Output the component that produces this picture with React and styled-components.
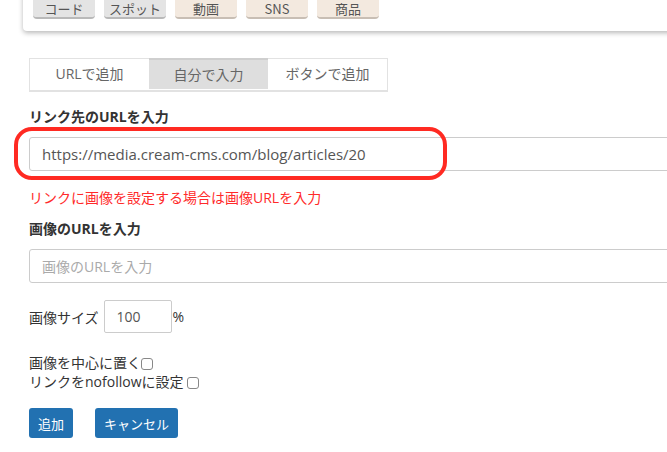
import styled, { createGlobalStyle } from "styled-components";

const GlobalStyle = createGlobalStyle`
  html, body {
    margin: 0;
    padding: 0;
    background: #fff;
    overflow: hidden;
  }
  body {
    font-family: "Open Sans", "Noto Sans CJK JP", sans-serif;
    color: #333;
  }
`;

const palette = ["コード", "スポット", "動画", "SNS", "商品"];

const App = () => {
  return (
    <Page>
      <GlobalStyle />
      <Palette>
        {palette.map((p, i) => (
          <PaletteButton key={p} beige={i > 1}>
            {p}
          </PaletteButton>
        ))}
      </Palette>
      <Form>
        <Tabs>
          <Tab>URLで追加</Tab>
          <Tab active>自分で入力</Tab>
          <Tab>ボタンで追加</Tab>
        </Tabs>
        <Label>リンク先のURLを入力</Label>
        <Highlight>
          <TextInput defaultValue="https://media.cream-cms.com/blog/articles/20" />
          <RedRing />
        </Highlight>
        <Note>リンクに画像を設定する場合は画像URLを入力</Note>
        <Label tight>画像のURLを入力</Label>
        <Field>
          <TextInput placeholder="画像のURLを入力" />
        </Field>
        <SizeRow>
          画像サイズ
          <SizeInput defaultValue="100" />%
        </SizeRow>
        <Checks>
          <CheckLine>
            画像を中心に置く<Check type="checkbox" />
          </CheckLine>
          <CheckLine>
            リンクをnofollowに設定&nbsp;<Check type="checkbox" />
          </CheckLine>
        </Checks>
        <Actions>
          <Button>追加</Button>
          <Button>キャンセル</Button>
        </Actions>
      </Form>
    </Page>
  );
};

const Page = styled.div`
  width: 667px;
  height: 452px;
  overflow: hidden;
`;

const Palette = styled.div`
  margin: -11px -20px 0 23px;
  padding: 0 0 12px 10px;
  background: #fff;
  border-radius: 4px;
  box-shadow: 0 2px 5px rgba(0, 0, 0, 0.28);
  display: flex;
  gap: 9px;
`;

const PaletteButton = styled.div`
  width: 62px;
  height: 30px;
  box-sizing: border-box;
  padding-top: 11px;
  text-align: center;
  font-family: "Noto Sans CJK JP", sans-serif;
  font-size: 13px;
  line-height: 17px;
  color: #555;
  border-radius: 4px;
  background: ${(p) => (p.beige ? "#f3e9df" : "#e4e4e4")};
  border-bottom: 2px solid ${(p) => (p.beige ? "#c8beb4" : "#b9b9b9")};
`;

const Form = styled.div`
  padding: 27px 0 0 29px;
`;

const Tabs = styled.div`
  display: flex;
  width: 359px;
  border: 1px solid #e2e2e2;
  border-bottom: 2px solid #e2e2e2;
  box-sizing: border-box;
`;

const Tab = styled.div`
  flex: 1;
  height: 31px;
  line-height: 30px;
  text-align: center;
  font-size: 14px;
  color: #666;
  background: ${(p) => (p.active ? "#dedede" : "#fff")};
  border-top: ${(p) => (p.active ? "2px solid #cfcfcf" : "0")};
  box-sizing: border-box;
  margin-top: ${(p) => (p.active ? "-1px" : "0")};
`;

const Label = styled.div`
  margin-top: ${(p) => (p.tight ? "13px" : "16px")};
  font-size: 14px;
  font-weight: bold;
  line-height: 18px;
  color: #333;
`;

const Highlight = styled.div`
  position: relative;
  margin-top: 11px;
`;

const Field = styled.div`
  margin-top: 11px;
`;

const RedRing = styled.div`
  position: absolute;
  left: -15px;
  top: -10px;
  width: 433px;
  height: 53px;
  box-sizing: border-box;
  border: 4px solid #ff2a22;
  border-radius: 18px;
  pointer-events: none;
`;

const TextInput = styled.input`
  display: block;
  width: 680px;
  height: 34px;
  box-sizing: border-box;
  margin: 0;
  padding: 0 12px;
  border: 1px solid #cccccc;
  border-radius: 3px;
  font-family: "Open Sans", "Noto Sans CJK JP", sans-serif;
  font-size: 15px;
  color: #555;
  outline: none;

  &::placeholder {
    color: #aaa;
    font-size: 14px;
  }
`;

const Note = styled.div`
  margin-top: 18px;
  font-size: 14px;
  color: #ff2a2a;
  line-height: 18px;
`;

const SizeRow = styled.div`
  margin-top: 17px;
  display: flex;
  align-items: center;
  font-size: 14px;
  color: #333;
`;

const SizeInput = styled.input`
  width: 68px;
  height: 33px;
  box-sizing: border-box;
  margin: 0 1px 0 5px;
  padding: 0 12px;
  border: 1px solid #cccccc;
  border-radius: 2px;
  font-family: "Open Sans", sans-serif;
  font-size: 14px;
  color: #555;
  outline: none;
`;

const Checks = styled.div`
  margin-top: 20px;
`;

const CheckLine = styled.label`
  display: flex;
  align-items: center;
  font-size: 14px;
  line-height: 19px;
  color: #333;
`;

const Check = styled.input`
  width: 12px;
  height: 12px;
  margin: 2px 0 0 0;
  appearance: none;
  border: 1px solid #888;
  border-radius: 3px;
  background: #fff;
`;

const Actions = styled.div`
  display: flex;
  gap: 22px;
  margin-top: 17px;
`;

const Button = styled.button`
  height: 30px;
  padding: 0 9px;
  border: 0;
  border-radius: 3px;
  background: #2271b1;
  color: #fff;
  font-family: "Noto Sans CJK JP", sans-serif;
  font-size: 13px;
`;

export default App;
